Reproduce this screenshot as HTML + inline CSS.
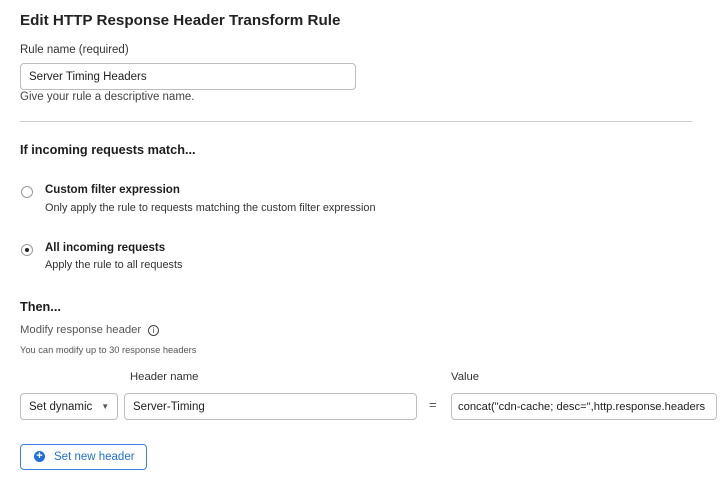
<html><head><style>
body{margin:0;width:720px;height:479px;background:#fff;font-family:"Liberation Sans",sans-serif;color:#1d1d1d;position:relative;overflow:hidden}
.a{position:absolute;white-space:nowrap}
.in{position:absolute;border:1px solid #bdbdbd;border-radius:4px;box-sizing:border-box;font-size:11.5px;color:#222;padding-left:8px;display:flex;align-items:center;background:#fff;white-space:nowrap;overflow:hidden}
.r{position:absolute;width:12px;height:12px;border:1px solid #999;border-radius:50%;box-sizing:border-box}
</style></head><body>
<div class="a" style="left:20px;top:12px;font-size:15.2px;font-weight:bold;color:#222">Edit HTTP Response Header Transform Rule</div>
<div class="a" style="left:20px;top:44px;font-size:11.5px;color:#333">Rule name (required)</div>
<div class="in" style="left:20px;top:63px;width:336px;height:27px">Server Timing Headers</div>
<div class="a" style="left:20px;top:91px;font-size:11.5px;color:#444">Give your rule a descriptive name.</div>
<div class="a" style="left:20px;top:121px;width:672px;height:1px;background:#ccc"></div>
<div class="a" style="left:20px;top:143px;font-size:12.7px;font-weight:bold">If incoming requests match...</div>
<div class="r" style="left:21px;top:186px"></div>
<div class="a" style="left:45px;top:184px;font-size:11.5px;font-weight:bold">Custom filter expression</div>
<div class="a" style="left:45px;top:202px;font-size:10.9px;color:#333">Only apply the rule to requests matching the custom filter expression</div>
<div class="r" style="left:21px;top:244px"><div style="position:absolute;left:3px;top:3px;width:4px;height:4px;border-radius:50%;background:#222"></div></div>
<div class="a" style="left:45px;top:242px;font-size:11.5px;font-weight:bold">All incoming requests</div>
<div class="a" style="left:45px;top:259px;font-size:10.9px;color:#333">Apply the rule to all requests</div>
<div class="a" style="left:20px;top:300px;font-size:12.7px;font-weight:bold">Then...</div>
<div class="a" style="left:20px;top:324px;font-size:11.3px;color:#555">Modify response header</div>
<div class="a" style="left:148px;top:325px;width:11px;height:11px;border:1px solid #444;border-radius:50%;box-sizing:border-box;font-size:8px;text-align:center;line-height:9px;color:#444">i</div>
<div class="a" style="left:20px;top:345px;font-size:9.3px;color:#555">You can modify up to 30 response headers</div>
<div class="a" style="left:130px;top:371px;font-size:11.3px;color:#333">Header name</div>
<div class="a" style="left:451px;top:371px;font-size:11.3px;color:#333">Value</div>
<div class="in" style="left:20px;top:393px;width:98px;height:27px">Set dynamic <span style="margin-left:9px;font-size:8px;color:#555">▼</span></div>
<div class="in" style="left:124px;top:393px;width:293px;height:27px">Server-Timing</div>
<div class="a" style="left:429px;top:397px;font-size:13px;color:#555">=</div>
<div class="in" style="left:451px;top:393px;width:266px;height:27px;padding-left:6px;font-size:11.2px">concat("cdn-cache; desc=",http.response.headers</div>
<div class="a" style="left:20px;top:444px;width:127px;height:26px;border:1px solid #3b82e0;border-radius:4px;box-sizing:border-box;font-size:11.5px;color:#1f6fd6">
<div style="position:absolute;left:13px;top:6px;width:11px;height:11px;border-radius:50%;background:#1f6fd6;color:#fff;font-size:11px;line-height:11px;text-align:center;font-weight:bold">+</div>
<span style="position:absolute;left:33px;top:6px">Set new header</span></div>
</body></html>
